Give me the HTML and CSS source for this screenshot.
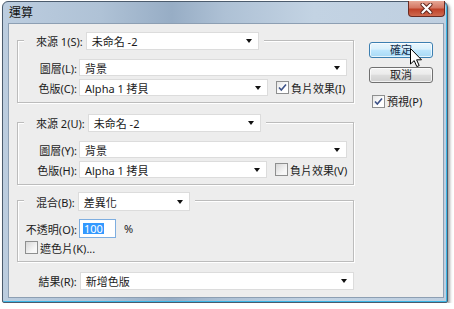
FILE: index.html
```html
<!DOCTYPE html>
<html lang="zh-Hant">
<head>
  <meta charset="UTF-8" />
  <title>運算</title>
  <link rel="stylesheet" href="styles.css">
</head>
<body>
  <div class="stage">
    <div class="window">
      <div class="titlebar">
        <span class="title">運算</span>
        <button class="close" aria-label="關閉">
          <svg width="13" height="11" viewBox="0 0 13 11">
            <path d="M2.5 1.5 L10.5 9.5 M10.5 1.5 L2.5 9.5" stroke="#5e2219" stroke-width="4" stroke-linecap="round"/>
            <path d="M2.5 1.5 L10.5 9.5 M10.5 1.5 L2.5 9.5" stroke="#fff" stroke-width="2.2" stroke-linecap="round"/>
          </svg>
        </button>
      </div>

      <div class="client">
        <div class="main">
          <div class="group g1">
            <div class="group-head">
              <label class="head-lbl">來源 1(S):</label>
              <div class="select tall w173"><span>未命名 -2</span><i class="arrow"></i></div>
            </div>
            <div class="row first">
              <label class="lbl">圖層(L):</label>
              <div class="select w268"><span>背景</span><i class="arrow"></i></div>
            </div>
            <div class="row">
              <label class="lbl">色版(C):</label>
              <div class="select w189"><span>Alpha 1 拷貝</span><i class="arrow"></i></div>
              <label class="check">
                <span class="box on"><svg width="11" height="11" viewBox="0 0 11 11"><path d="M2 5.5 L4.3 8 L9 2.5" fill="none" stroke="#3d5288" stroke-width="1.6"/></svg></span>
                負片效果(I)
              </label>
            </div>
          </div>

          <div class="group g2">
            <div class="group-head">
              <label class="head-lbl">來源 2(U):</label>
              <div class="select tall w173"><span>未命名 -2</span><i class="arrow"></i></div>
            </div>
            <div class="row first">
              <label class="lbl">圖層(Y):</label>
              <div class="select w268"><span>背景</span><i class="arrow"></i></div>
            </div>
            <div class="row">
              <label class="lbl">色版(H):</label>
              <div class="select w188"><span>Alpha 1 拷貝</span><i class="arrow"></i></div>
              <label class="check">
                <span class="box"></span>
                負片效果(V)
              </label>
            </div>
          </div>

          <div class="group g3">
            <div class="group-head">
              <label class="head-lbl">混合(B):</label>
              <div class="select tall w112"><span>差異化</span><i class="arrow"></i></div>
            </div>
            <div class="row opacity">
              <label class="lbl">不透明(O):</label>
              <div class="field"><span class="sel">100</span></div>
              <span class="pct">%</span>
            </div>
            <div class="row mask">
              <label class="check">
                <span class="box"></span>
                遮色片(K)...
              </label>
            </div>
          </div>

          <div class="row result">
            <label class="lbl">結果(R):</label>
            <div class="select w275"><span>新增色版</span><i class="arrow"></i></div>
          </div>
        </div>

        <div class="side">
          <button class="btn default">確定
            <svg class="cursor" width="13" height="20" viewBox="0 0 13 20">
              <path d="M0.5 0.5 L0.5 16 L4.2 12.6 L6.8 18.6 L9.2 17.6 L6.6 11.8 L11.5 11.8 Z" fill="#fff" stroke="#000" stroke-width="1"/>
            </svg>
          </button>
          <button class="btn">取消</button>
          <label class="check preview">
            <span class="box on"><svg width="11" height="11" viewBox="0 0 11 11"><path d="M2 5.5 L4.3 8 L9 2.5" fill="none" stroke="#3d5288" stroke-width="1.6"/></svg></span>
            預視(P)
          </label>
        </div>
      </div>
    </div>
  </div>
</body>
</html>
```

FILE: styles.css
```css
html, body {
  margin: 0;
  background-color: #fff;
  font-family: "Noto Sans", "Noto Sans CJK TC", sans-serif;
  font-size: 11px;
  color: #1b1b1b;
}

.stage {
  padding: 1px 0 0 2px;
}

.window {
  width: 446px;
  height: 302px;
  box-sizing: border-box;
  border: 1px solid #4b5b6d;
  border-radius: 6px 6px 2px 2px;
  padding: 0 3px 4px 5px;
  display: flex;
  flex-direction: column;
  background: linear-gradient(90deg, #bccddf 0%, #afc2d6 22%, #97adc5 38%, #aec1d5 50%, #c3d3e3 70%, #bfcfe0 100%);
  box-shadow: inset 0 -1px 0 #3cb6e6, inset -1px 0 0 #3cb6e6, 2px 2px 3px rgba(0, 0, 0, 0.35);
}

.titlebar {
  height: 21px;
  display: flex;
  align-items: flex-start;
}

.title {
  margin: 4px 0 0 1px;
  font-size: 12px;
  line-height: 14px;
  color: #111;
}

.close {
  margin: -1px -1px 0 auto;
  width: 37px;
  height: 16px;
  padding: 0;
  border: 1px solid #6a2b22;
  border-top: none;
  border-radius: 0 0 4px 4px;
  background: linear-gradient(#e6a796, #d47763 45%, #bf4128 55%, #cf6a4f);
  display: flex;
  justify-content: center;
  align-items: center;
}

.client {
  flex: 1;
  display: flex;
  gap: 15px;
  border: 1px solid #8d9fb3;
  background-color: #ededed;
  padding-left: 8px;
}

.main {
  width: 337px;
  padding-top: 16px;
}

.group {
  box-sizing: border-box;
  border: 1px solid #bcbcbc;
  box-shadow: inset 1px 1px 0 #fff, 1px 1px 0 #fff;
  padding-bottom: 6px;
}

.g2 {
  margin-top: 19px;
}

.g3 {
  margin-top: 15px;
  padding-bottom: 7px;
}

.group-head {
  display: flex;
  align-items: center;
  width: max-content;
  margin: -9px 0 0 6px;
  padding: 0 5px 0 12px;
  background-color: #ededed;
}

.head-lbl {
  margin-right: 3px;
}

.row {
  display: flex;
  align-items: center;
  height: 17px;
  margin-top: 3px;
}

.row.first {
  margin-top: 9px;
}

.lbl {
  width: 59px;
  text-align: right;
  margin-right: 2px;
  white-space: nowrap;
}

.select {
  height: 17px;
  box-sizing: border-box;
  background-color: #fff;
  border: 1px solid #dcdcdc;
  display: flex;
  align-items: center;
  justify-content: space-between;
  padding: 0 6px 0 5px;
}

.select.tall {
  height: 18px;
}

.g3 .select.tall {
  height: 19px;
}

.w112 { width: 112px; }
.w173 { width: 173px; }
.w188 { width: 188px; }
.w189 { width: 189px; }
.w268 { width: 268px; }
.w275 { width: 275px; }

.arrow {
  width: 0;
  height: 0;
  border-left: 3px solid transparent;
  border-right: 3px solid transparent;
  border-top: 4px solid #111;
}

.check {
  display: flex;
  align-items: center;
  gap: 2px;
  margin-left: 8px;
  white-space: nowrap;
}

.box {
  width: 13px;
  height: 13px;
  box-sizing: border-box;
  border: 1px solid #8e8f8f;
  background: linear-gradient(135deg, #d6d6d6, #f7f7f7 70%);
  display: flex;
  justify-content: center;
  align-items: center;
}

.box.on {
  background: linear-gradient(135deg, #e4e4e4, #fff 60%);
}

.row.opacity {
  height: 19px;
  margin-top: 8px;
}

.field {
  width: 37px;
  height: 19px;
  box-sizing: border-box;
  background-color: #fff;
  border: 1px solid #7eaee0;
  padding-left: 3px;
  display: flex;
  align-items: center;
}

.sel {
  background-color: #3399ff;
  color: #fff;
  line-height: 11px;
  padding: 0 1px;
}

.pct {
  margin-left: 8px;
}

.row.mask {
  height: 13px;
  padding-left: 7px;
}

.row.mask .check {
  margin-left: 0;
}

.row.result {
  height: 18px;
  margin-top: 10px;
}

.row.result .lbl {
  width: 60px;
  margin-right: 3px;
}

.row.result .select {
  height: 18px;
}

.side {
  width: 64px;
  padding-top: 18px;
  display: flex;
  flex-direction: column;
}

.btn {
  position: relative;
  height: 16px;
  padding: 0;
  font-family: inherit;
  font-size: 11px;
  line-height: 14px;
  color: #1b1b1b;
  border: 1px solid #707070;
  border-radius: 3px;
  background: linear-gradient(#f3f3f3, #ebebeb 45%, #dddddd 50%, #cfcfcf);
  box-shadow: inset 0 0 0 1px rgba(255, 255, 255, 0.7);
}

.btn + .btn {
  margin-top: 9px;
}

.btn.default {
  border-color: #3c7fb1;
  background: linear-gradient(#eaf6fd, #d9f0fc 45%, #bee6fd 50%, #a7d9f5);
  color: #17324f;
}

.cursor {
  position: absolute;
  left: 40px;
  top: 5px;
}

.check.preview {
  margin: 10px 0 0 3px;
}
```
